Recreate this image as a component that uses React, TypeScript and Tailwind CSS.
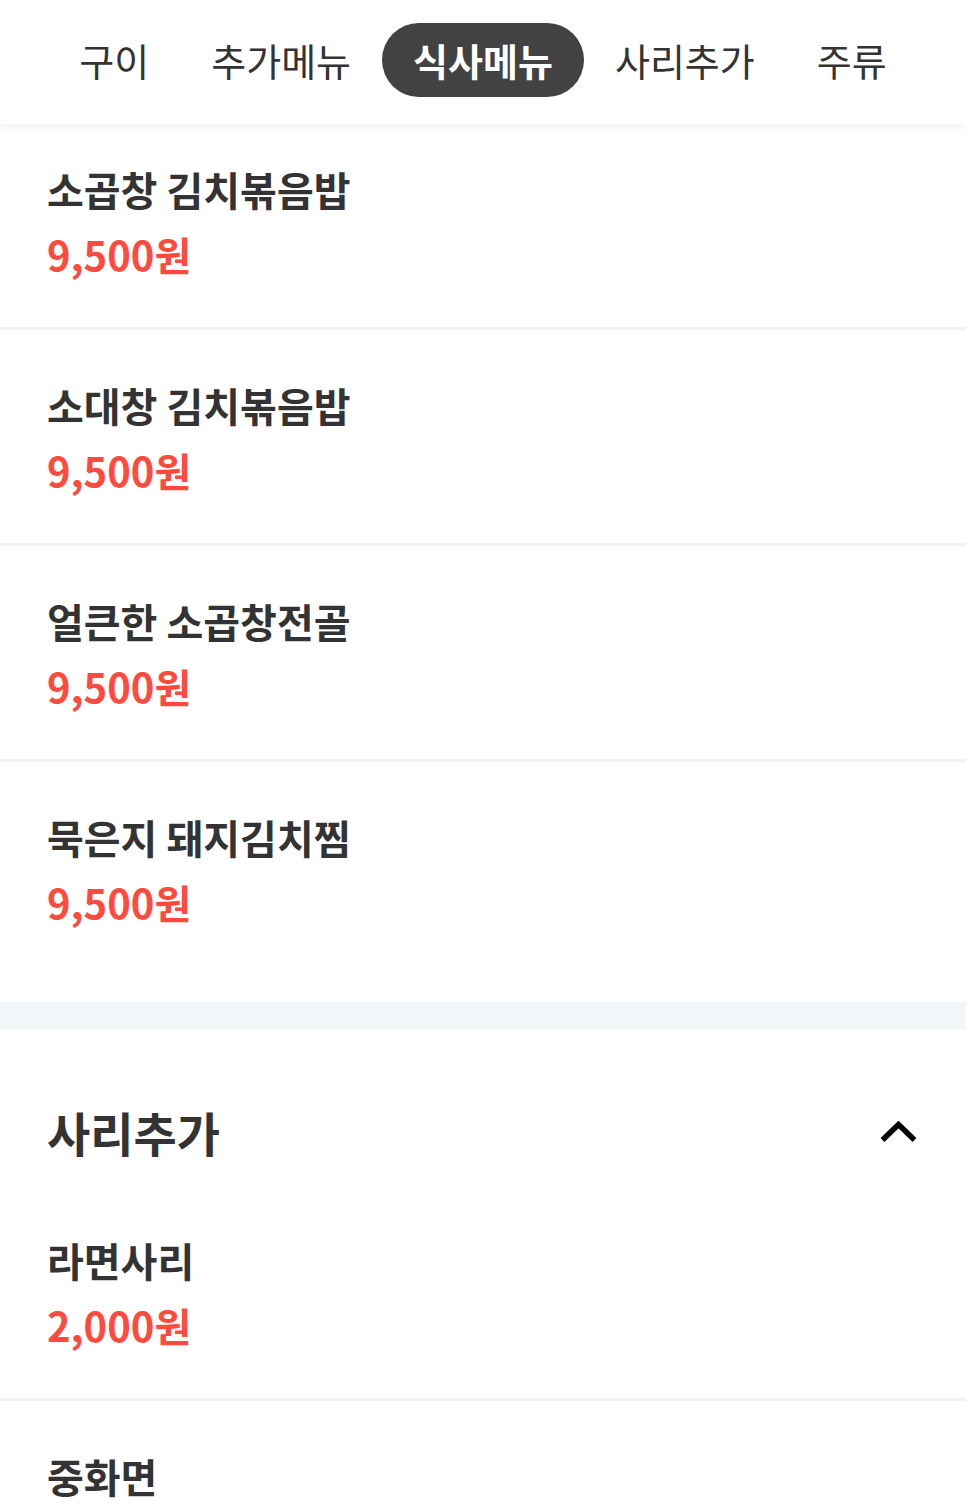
import React from 'react';

const tabs = ['구이', '추가메뉴', '식사메뉴', '사리추가', '주류'];

const mealMenu = [
  { name: '소곱창 김치볶음밥', price: '9,500원' },
  { name: '소대창 김치볶음밥', price: '9,500원' },
  { name: '얼큰한 소곱창전골', price: '9,500원' },
  { name: '묵은지 돼지김치찜', price: '9,500원' },
];

const sariMenu = [
  { name: '라면사리', price: '2,000원' },
  { name: '중화면', price: '2,000원' },
];

function MenuItem({ name, price, first, last }: { name: string; price: string; first?: boolean; last?: boolean }) {
  return (
    <div
      className={`flex flex-col gap-[17px] px-[47px] ${first ? 'pt-[41px]' : 'pt-[51px]'} pb-[49px] ${
        last ? '' : 'border-b-[3px] border-[#f2f2f2]'
      }`}
    >
      <div className="text-[40px] leading-[48px] font-bold text-[#333333]">{name}</div>
      <div className="text-[40px] leading-[48px] font-bold text-[#ff4a3d]">{price}</div>
    </div>
  );
}

export default function App() {
  return (
    <div
      className="w-full min-h-screen bg-white overflow-hidden"
      style={{ fontFamily: '"Noto Sans CJK KR", "Noto Sans", sans-serif' }}
    >
      <nav className="relative z-10 h-[124px] bg-white flex justify-center items-start pt-[23px] shadow-[0_4px_10px_rgba(0,0,0,0.05)]">
        {tabs.map((tab) => {
          const active = tab === '식사메뉴';
          return (
            <div
              key={tab}
              className={`h-[74px] px-[31px] flex items-center rounded-full text-[38px] leading-none ${
                active ? 'bg-[#424242] text-white font-bold' : 'text-[#333333] font-normal'
              }`}
            >
              {tab}
            </div>
          );
        })}
      </nav>

      <section className="pb-[27px]">
        {mealMenu.map((item, i) => (
          <MenuItem key={item.name} {...item} first={i === 0} last={i === mealMenu.length - 1} />
        ))}
      </section>

      <div className="h-[27px] bg-[#f3f6f9]" />

      <section className="pt-[73px]">
        <div className="h-[60px] flex items-center justify-between pl-[47px] pr-[49px] mb-[23px]">
          <h2 className="text-[47px] leading-[60px] font-bold text-[#333333]">사리추가</h2>
          <svg width="37" height="22" viewBox="0 0 37 22" fill="none">
            <polyline points="2.5,19 18.5,3.5 34.5,19" stroke="#000" strokeWidth="5.5" strokeLinejoin="miter" />
          </svg>
        </div>
        {sariMenu.map((item, i) => (
          <MenuItem key={item.name} {...item} last={i === sariMenu.length - 1} />
        ))}
      </section>
    </div>
  );
}
